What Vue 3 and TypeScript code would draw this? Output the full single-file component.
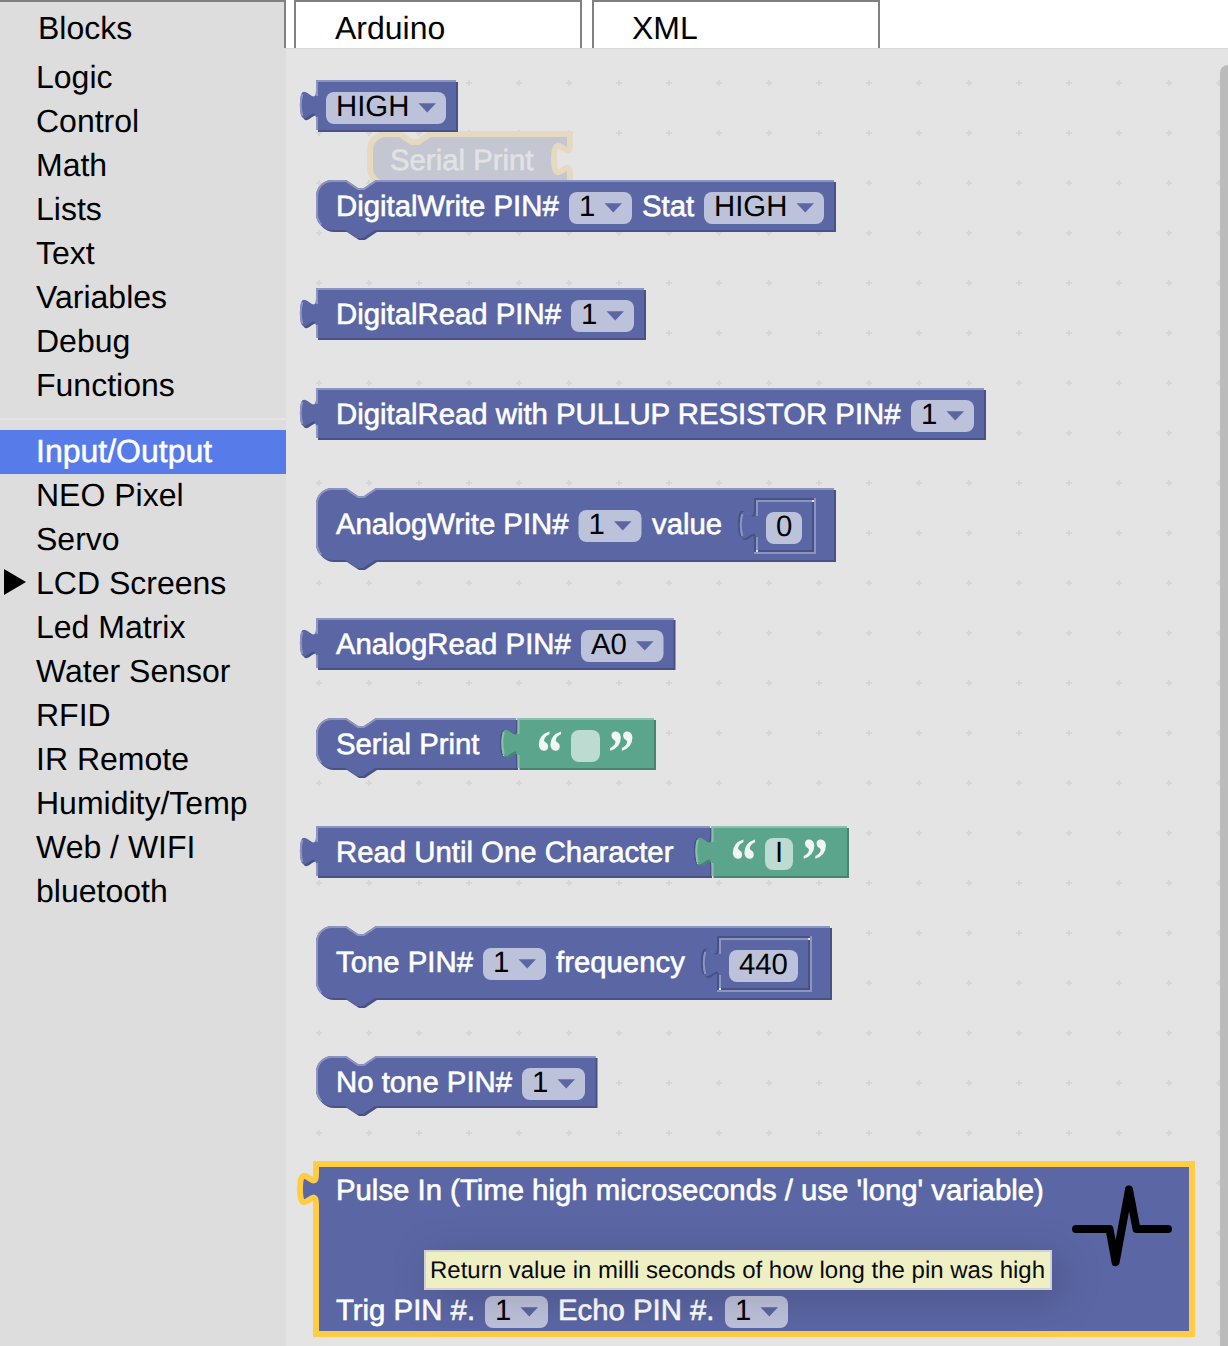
<script setup lang="ts">
type Part =
  | { kind: 'label'; x: number; text: string; row?: number }
  | { kind: 'dropdown'; x: number; w: number; text: string; row?: number }
  | { kind: 'number'; x: number; w: number; text: string; slotX: number; slotW: number }
  | { kind: 'string'; x: number; w: number; text: string; slotX: number; slotW: number; quoteL: number; quoteR: number }

interface Block {
  shape: 'statement' | 'output'
  y: number
  w: number
  h: number
  socket?: boolean
  parts: Part[]
}

const ORIGIN_X = 316

const tabs = ['Blocks', 'Arduino', 'XML']
const basics = ['Logic', 'Control', 'Math', 'Lists', 'Text', 'Variables', 'Debug', 'Functions']
const devices = [
  'Input/Output', 'NEO Pixel', 'Servo', 'LCD Screens', 'Led Matrix', 'Water Sensor',
  'RFID', 'IR Remote', 'Humidity/Temp', 'Web / WIFI', 'bluetooth',
]

const blocks: Block[] = [
  { shape: 'output', y: 80, w: 140, h: 50, parts: [{ kind: 'dropdown', x: 326, w: 120, text: 'HIGH' }] },
  {
    shape: 'statement', y: 180, w: 518, h: 50, parts: [
      { kind: 'label', x: 336, text: 'DigitalWrite PIN#' },
      { kind: 'dropdown', x: 569, w: 63, text: '1' },
      { kind: 'label', x: 642, text: 'Stat' },
      { kind: 'dropdown', x: 704, w: 120, text: 'HIGH' },
    ],
  },
  {
    shape: 'output', y: 288, w: 328, h: 50, parts: [
      { kind: 'label', x: 336, text: 'DigitalRead PIN#' },
      { kind: 'dropdown', x: 571, w: 63, text: '1' },
    ],
  },
  {
    shape: 'output', y: 388, w: 668, h: 50, parts: [
      { kind: 'label', x: 336, text: 'DigitalRead with PULLUP RESISTOR PIN#' },
      { kind: 'dropdown', x: 911, w: 63, text: '1' },
    ],
  },
  {
    shape: 'statement', y: 488, w: 518, h: 72, parts: [
      { kind: 'label', x: 336, text: 'AnalogWrite PIN#' },
      { kind: 'dropdown', x: 578.5, w: 63, text: '1' },
      { kind: 'label', x: 652, text: 'value' },
      { kind: 'number', x: 766, w: 36, text: '0', slotX: 756, slotW: 56 },
    ],
  },
  {
    shape: 'output', y: 618, w: 357.5, h: 50, parts: [
      { kind: 'label', x: 336, text: 'AnalogRead PIN#' },
      { kind: 'dropdown', x: 581, w: 82.5, text: 'A0' },
    ],
  },
  {
    shape: 'statement', y: 718, w: 200, h: 50, socket: true, parts: [
      { kind: 'label', x: 336, text: 'Serial Print' },
      { kind: 'string', x: 571, w: 29, text: '', slotX: 517.5, slotW: 136.5, quoteL: 549.5, quoteR: 621.5 },
    ],
  },
  {
    shape: 'output', y: 826, w: 394, h: 50, socket: true, parts: [
      { kind: 'label', x: 336, text: 'Read Until One Character' },
      { kind: 'string', x: 765, w: 28, text: 'I', slotX: 711.5, slotW: 135.5, quoteL: 743.5, quoteR: 815 },
    ],
  },
  {
    shape: 'statement', y: 926, w: 514, h: 72, parts: [
      { kind: 'label', x: 336, text: 'Tone PIN#' },
      { kind: 'dropdown', x: 483, w: 63, text: '1' },
      { kind: 'label', x: 556, text: 'frequency' },
      { kind: 'number', x: 729, w: 69, text: '440', slotX: 719, slotW: 89 },
    ],
  },
  {
    shape: 'statement', y: 1056, w: 279.5, h: 50, parts: [
      { kind: 'label', x: 336, text: 'No tone PIN#' },
      { kind: 'dropdown', x: 522, w: 63, text: '1' },
    ],
  },
]

const pulse: Part[] = [
  { kind: 'label', x: 336, text: "Pulse In (Time high microseconds / use 'long' variable)" },
  { kind: 'label', x: 336, text: 'Trig PIN #.', row: 120 },
  { kind: 'dropdown', x: 485, w: 63, text: '1', row: 120 },
  { kind: 'label', x: 558, text: 'Echo PIN #.', row: 120 },
  { kind: 'dropdown', x: 725, w: 63, text: '1', row: 120 },
]

const drawn = [...blocks.map((b) => ({ ...b, selected: false })),
  { shape: 'output' as const, y: 1164, w: 876, h: 170, socket: false, parts: pulse, selected: true }]

// Outlines are expressed in workspace units; one unit is two pixels.
function outline(shape: string, wPx: number, hPx: number, socket = false): string {
  const w = wPx / 2
  const h = hPx / 2
  const right = socket ? `H ${w} V 5 c 0,10 -8,-8 -8,7.5 s 8,-2.5 8,7.5 V ${h}` : `H ${w} V ${h}`
  return shape === 'statement'
    ? `M 0,8 A 8,8 0 0,1 8,0 H 15 l 6,4 3,0 6,-4 ${right} H 29.5 l -6,4 -3,0 -6,-4 H 8 A 8,8 0 0,1 0,${h - 8} Z`
    : `M 0,0 ${right} H 0 V 20 c 0,-10 -8,8 -8,-7.5 s 8,2.5 8,-7.5 Z`
}

function highlight(shape: string, wPx: number, hPx: number): string {
  const w = wPx / 2
  const h = hPx / 2
  return shape === 'statement'
    ? `M 0.5,8 A 7.5,7.5 0 0,1 8,0.5 H 15 l 6,4 3,0 6,-4 H ${w} M 2.7,${h - 2.7} A 7.5,7.5 0 0,1 0.5,${h - 8} V 8`
    : `M 0.5,${h} V 18.5 m -7.36,-0.5 q -1.52,-5.5 0,-11 m 7.36,1 V 0.5 H ${w}`
}

const place = (x: number, y: number) => `translate(${x} ${y}) scale(2)`
const offset = (b: { h: number }) => (b.h === 72 ? 10 : 0)
const arrow = (right: number, top: number) => `M ${right - 27.5},${top} h 17.5 l -8.75,9.3 Z`
</script>

<template>
  <div class="app">
    <nav class="tabs">
      <div v-for="(t, i) in tabs" :key="t" class="tab" :class="{ active: i === 0 }">{{ t }}</div>
    </nav>
    <div class="body">
      <aside class="toolbox">
        <div v-for="c in basics" :key="c" class="category">{{ c }}</div>
        <div class="separator"></div>
        <div v-for="c in devices" :key="c" class="category" :class="{ selected: c === 'Input/Output' }">
          <svg v-if="c === 'LCD Screens'" class="expander" width="22" height="26" viewBox="0 0 22 26">
            <path d="M0,0 L22,13 L0,26 Z" />
          </svg>
          {{ c }}
        </div>
      </aside>

      <main class="workspace">
        <svg class="canvas" width="942" height="1298" viewBox="286 48 942 1298">
          <defs>
            <pattern id="grid" x="294" y="58" width="50" height="50" patternUnits="userSpaceOnUse">
              <path d="M22,25 h6 M25,22 v6" stroke="#d6d6d6" stroke-width="2" />
            </pattern>
          </defs>
          <rect x="286" y="48" width="942" height="1298" fill="#e4e4e4" />
          <rect x="286" y="48" width="942" height="1298" fill="url(#grid)" />
          <rect x="286" y="48" width="942" height="1" fill="#d8d8d8" />

          <g class="ghost">
            <path :d="outline('statement', 200, 50, true)" :transform="place(370, 134)" />
            <text x="390" y="170">Serial Print</text>
          </g>

          <g v-for="b in drawn" :key="b.y">
            <template v-if="!b.selected">
              <path class="dark" :d="outline(b.shape, b.w, b.h, b.socket)" :transform="place(ORIGIN_X + 2, b.y + 2)" />
              <path class="fill" :d="outline(b.shape, b.w, b.h, b.socket)" :transform="place(ORIGIN_X, b.y)" />
              <path class="light" :d="highlight(b.shape, b.w, b.h)" :transform="place(ORIGIN_X, b.y)" />
            </template>
            <path v-else class="fill picked" :d="outline(b.shape, b.w, b.h)" :transform="place(ORIGIN_X, b.y)" />

            <template v-for="(p, i) in b.parts" :key="i">
              <text v-if="p.kind === 'label'" class="label" :x="p.x" :y="b.y + 36 + offset(b) + (p.row ?? 0)">{{ p.text }}</text>

              <template v-else-if="p.kind === 'dropdown'">
                <rect class="field" :x="p.x" :y="b.y + 12 + offset(b) + (p.row ?? 0)" :width="p.w" height="32" rx="8" />
                <text class="value" :x="p.x + 10" :y="b.y + 36 + offset(b) + (p.row ?? 0)">{{ p.text }}</text>
                <path class="fill" :d="arrow(p.x + p.w, b.y + 23.2 + offset(b) + (p.row ?? 0))" />
              </template>

              <template v-else-if="p.kind === 'number'">
                <path class="rim" :d="outline('output', p.slotW + 4, 54)" :transform="place(p.slotX, b.y + 12)" />
                <rect class="rim" :x="p.slotX - 2" :y="b.y + 10" :width="p.slotW + 6" height="56" />
                <path class="dark" :d="outline('output', p.slotW, 50)" :transform="place(p.slotX - 2, b.y + 11)" />
                <rect class="dark" :x="p.slotX - 2" :y="b.y + 10" :width="p.slotW + 4" height="54" />
                <path class="dark" :d="outline('output', p.slotW, 50)" :transform="place(p.slotX + 1, b.y + 14)" />
                <path class="fill" :d="outline('output', p.slotW, 50)" :transform="place(p.slotX, b.y + 12)" />
                <path class="light" :d="highlight('output', p.slotW, 50)" :transform="place(p.slotX, b.y + 12)" />
                <rect class="glint" :x="p.slotX + p.slotW" :y="b.y + 12" width="2" height="2" />
                <rect class="glint" :x="p.slotX" :y="b.y + 62" width="2" height="2" />
                <rect class="field" :x="p.x" :y="b.y + 24" :width="p.w" height="32" rx="8" />
                <text class="value" :x="p.x + 10" :y="b.y + 48">{{ p.text }}</text>
              </template>

              <g v-else class="string">
                <path class="dark" :d="outline('output', p.slotW, 50)" :transform="place(p.slotX + 2, b.y + 2)" />
                <path class="fill" :d="outline('output', p.slotW, 50)" :transform="place(p.slotX, b.y)" />
                <path class="light" :d="highlight('output', p.slotW, 50)" :transform="place(p.slotX, b.y)" />
                <text class="quote" :x="p.quoteL" :y="b.y + 56" textLength="26.5" lengthAdjust="spacingAndGlyphs">“</text>
                <rect class="field" :x="p.x" :y="b.y + 12" :width="p.w" height="32" rx="8" />
                <text class="value" :x="p.x + 10" :y="b.y + 36">{{ p.text }}</text>
                <text class="quote" :x="p.quoteR" :y="b.y + 56" textLength="26.5" lengthAdjust="spacingAndGlyphs">”</text>
              </g>
            </template>
          </g>

          <path class="pulse" d="M1076,1229 H1109.5 L1115.6,1262.3 L1129,1189.5 L1136.5,1229 H1168" />
          <path d="M1228,65 A8,8 0 0,0 1220,73 V1346 H1228 Z" fill="#bbb" />
        </svg>
        <div class="tooltip">Return value in milli seconds of how long the pin was high</div>
      </main>
    </div>
  </div>
</template>

<style>
body {
  margin: 0;
  background: #fff;
  overflow: hidden;
}
</style>

<style scoped>
.app {
  width: 1228px;
  height: 1346px;
  overflow: hidden;
  font-family: 'Liberation Sans', Arial, sans-serif;
  color: #000;
  text-rendering: geometricPrecision;
}
.tabs {
  display: flex;
  gap: 10px;
  height: 48px;
}
.tab {
  box-sizing: border-box;
  width: 288px;
  height: 48px;
  padding-left: 39px;
  border: 2px solid #808080;
  border-bottom: 0;
  font-size: 32px;
  line-height: 53px;
  background: #fff;
}
.tab.active {
  width: 286px;
  margin-right: -2px;
  padding-left: 38px;
  border-left: 0;
  background: #ddd;
}
.tab:nth-child(3) {
  padding-left: 38px;
}
.body {
  display: flex;
}
.toolbox {
  box-sizing: border-box;
  width: 286px;
  height: 1298px;
  padding-top: 8px;
  background: #ddd;
}
.category {
  position: relative;
  height: 44px;
  padding-left: 36px;
  font-size: 32px;
  line-height: 42px;
  white-space: nowrap;
}
.category.selected {
  background: #577be9;
  color: #fff;
  -webkit-text-stroke: 0.5px #fff;
}
.expander {
  position: absolute;
  left: 4px;
  top: 7px;
}
.separator {
  height: 2px;
  margin: 10px 0;
  background: #e5e5e5;
}
.workspace {
  position: relative;
  width: 942px;
  height: 1298px;
}
.canvas {
  display: block;
}
.canvas text {
  font-size: 29.33px;
  white-space: pre;
}
.fill { fill: #5b67a5; }
.dark { fill: #495284; }
.rim { fill: #8c95c0; }
.light {
  fill: none;
  stroke: #8c95c0;
  stroke-width: 1;
}
.string .fill { fill: #5ba58c; }
.string .dark { fill: #498470; }
.string .light { stroke: #8cc0ae; }
.picked {
  stroke: #fc4;
  stroke-width: 3;
}
.label {
  fill: #fff;
  stroke: #fff;
  stroke-width: 0.6;
}
.field {
  fill: #fff;
  fill-opacity: 0.6;
}
.value { fill: #000; }
.glint { fill: #e4e4e4; }
.canvas .quote {
  font-family: 'Liberation Serif', serif;
  font-weight: 700;
  font-size: 64px;
  fill: #fff;
  fill-opacity: 0.9;
  text-anchor: middle;
}
.ghost path {
  fill: #c4c6d2;
  stroke: #e5dabf;
  stroke-width: 3;
}
.ghost text {
  fill: #e2e2e2;
  stroke: #e2e2e2;
  stroke-width: 0.6;
}
.pulse {
  fill: none;
  stroke: #000;
  stroke-width: 8;
  stroke-linecap: round;
  stroke-linejoin: round;
}
.tooltip {
  position: absolute;
  left: 138px;
  top: 1202px;
  box-sizing: border-box;
  width: 628px;
  height: 40px;
  padding-left: 4px;
  border: 2px solid #ddd;
  background: #ffffc7;
  opacity: 0.9;
  box-shadow: 8px 8px 40px 2px rgba(0, 0, 0, 0.17);
  font-size: 24px;
  line-height: 37px;
  white-space: nowrap;
}
</style>
